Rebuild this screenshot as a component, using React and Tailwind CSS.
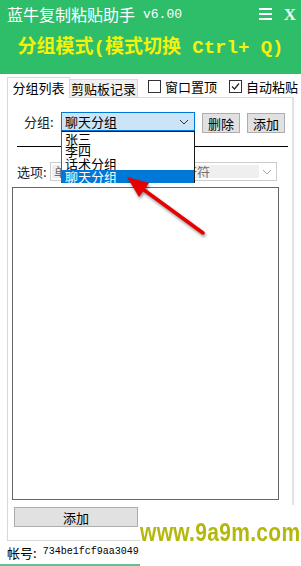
import React from 'react';

const cjk = { fontFamily: '"Noto Sans CJK SC", "Noto Sans", sans-serif' };
const mono = { fontFamily: '"Liberation Mono", "Noto Sans CJK SC", monospace' };

const Chevron = ({ color = '#333' }) => (
    <svg width="10" height="6" viewBox="0 0 10 6">
        <polyline points="1,1 5,5 9,1" fill="none" stroke={color} strokeWidth="1" />
    </svg>
);

const Box = ({ checked }) => (
    <span className="shrink-0 w-[13px] h-[13px] border border-[#333] bg-white flex items-center justify-center">
        {checked && (
            <svg width="11" height="11" viewBox="0 0 11 11">
                <polyline points="2,5.5 4.5,8 9,2.5" fill="none" stroke="#222" strokeWidth="1.2" />
            </svg>
        )}
    </span>
);

const Btn = ({ label, className }) => (
    <div className={`shrink-0 h-[20px] bg-[#e1e1e1] border border-[#adadad] flex items-center justify-center text-[13px] text-black leading-none ${className}`}>
        {label}
    </div>
);

export default function App() {
    return (
        <div className="relative w-[301px] h-[566px] overflow-hidden bg-white text-black" style={cjk}>
            {/* header */}
            <div className="h-[74px] bg-[#2ebe6a] flex flex-col">
                <div className="h-[28px] pl-[7px] pr-[5px] flex items-center">
                    <span className="text-[16px] text-white leading-none">蓝牛复制粘贴助手</span>
                    <span className="ml-[8px] text-[13px] text-white leading-none" style={mono}>v6.00</span>
                    <div className="ml-auto flex items-center gap-[12px]">
                        <div className="flex flex-col gap-[3px] w-[13px]">
                            <span className="h-[2px] bg-white" />
                            <span className="h-[2px] bg-white" />
                            <span className="h-[2px] bg-white" />
                        </div>
                        <span className="text-[17px] font-bold text-[#f2fff8] leading-none" style={{ fontFamily: '"Liberation Serif", serif' }}>X</span>
                    </div>
                </div>
                <div className="mt-[11px] text-center text-[19px] font-bold text-[#f2f20a] leading-none whitespace-nowrap" style={mono}>
                    分组模式(模式切换 Ctrl+ Q)
                </div>
            </div>

            {/* tab strip */}
            <div className="mt-[2px] h-[21px] pl-[7px] flex items-end whitespace-nowrap">
                <div className="shrink-0 w-[63px] h-[21px] bg-white border border-b-0 border-[#d9d9d9] flex items-center justify-center text-[13px] leading-none relative z-10 -mb-px pb-px">
                    分组列表
                </div>
                <div className="shrink-0 w-[68px] h-[18px] bg-[#f0f0f0] border border-l-0 border-b-0 border-[#d9d9d9] flex items-center justify-center text-[13px] leading-none">
                    剪贴板记录
                </div>
                <div className="shrink-0 ml-[10px] self-start mt-[4px] flex items-center text-[13px] leading-none">
                    <Box />
                    <span className="ml-[4px]">窗口置顶</span>
                    <span className="ml-[12px]"><Box checked /></span>
                    <span className="ml-[4px]">自动粘贴</span>
                </div>
            </div>

            {/* panel */}
            <div className="ml-[7px] w-[287px] h-[444px] border border-[#d9d9d9] border-r-2 border-r-[#e3e3e3] flex flex-col">
                <div className="mt-[14px] flex items-start">
                    <span className="shrink-0 ml-[16px] w-[37px] h-[19px] flex items-center text-[13px] leading-none text-[#222]">分组:</span>
                    <div className="shrink-0 w-[134px] h-[19px] bg-[#cce4f7] border border-[#0078d7] flex items-center pl-[3px] pr-[5px] text-[13px] leading-none">
                        <span>聊天分组</span>
                        <span className="ml-auto"><Chevron /></span>
                    </div>
                    <Btn label="删除" className="ml-[7px] w-[38px] mt-[1px]" />
                    <Btn label="添加" className="ml-[7px] w-[38px] mt-[1px]" />
                </div>

                <div className="mt-[13px] ml-[9px] w-[271px] h-px bg-black" />

                <div className="mt-[15px] flex items-center">
                    <span className="shrink-0 ml-[9px] w-[33px] text-[13px] leading-none text-[#222]">选项:</span>
                    <div className="shrink-0 w-[227px] h-[19px] bg-white border border-[#cccccc] flex items-center pl-px">
                        <span className="w-[207px] h-[13px] bg-[#efefef] flex items-center pl-[2px] text-[13px] leading-none text-[#6d6d6d] whitespace-nowrap overflow-hidden">
                            单击发送内容并去掉换行符
                        </span>
                        <span className="ml-auto mr-[4px]"><Chevron color="#aaa" /></span>
                    </div>
                </div>

                <div className="mt-[6px] ml-[4px] w-[267px] h-[313px] border border-[#666]" />

                <Btn label="添加" className="mt-[7px] ml-[6px] w-[124px]" />
            </div>

            {/* account */}
            <div className="mt-[3px] pl-[7px] flex items-center h-[16px] whitespace-nowrap">
                <span className="text-[13px] leading-none">帐号:</span>
                <span className="ml-[6px] text-[10px] leading-none" style={mono}>734be1fcf9aa3049</span>
            </div>
            <div className="absolute left-0 bottom-0 w-[140px] h-[2px] bg-[#60c28d]" />

            {/* dropdown list */}
            <div className="absolute left-[61px] top-[131px] w-[134px] h-[52px] bg-white border border-[#1a1a1a] border-l-[#0078d7] flex flex-col text-[13px] leading-[13px]">
                <div className="h-[12px] pl-[3px]">张三</div>
                <div className="h-[13px] pl-[3px]">李四</div>
                <div className="h-[13px] pl-[3px]">话术分组</div>
                <div className="h-[13px] pl-[3px] bg-[#0078d7] text-white">聊天分组</div>
            </div>

            {/* watermark */}
            <div className="absolute left-[140px] top-[505px] w-[161px] h-[43px] bg-white flex items-end">
                <span className="text-[21px] font-bold text-[#b4b80c] leading-none pb-[3px] whitespace-nowrap tracking-[0.3px] scale-y-[1.2] origin-bottom" style={{ fontFamily: '"Liberation Sans", Arial, sans-serif' }}>
                    www.9a9m.com
                </span>
            </div>

            {/* red arrow */}
            <svg className="absolute left-0 top-0 pointer-events-none" width="301" height="566" style={{ filter: 'drop-shadow(1px 2px 1.5px rgba(0,0,0,0.45))' }}>
                <line x1="203" y1="233" x2="140" y2="187" stroke="#e60000" strokeWidth="3.5" strokeLinecap="round" />
                <polygon points="127,177 149,183 139,197" fill="#e60000" />
            </svg>
        </div>
    );
}
